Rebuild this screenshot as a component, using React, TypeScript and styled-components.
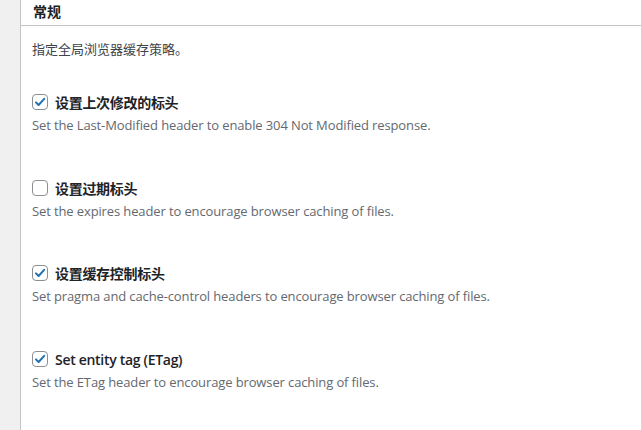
import React from "react";
import styled, { createGlobalStyle } from "styled-components";

const Global = createGlobalStyle`
  html, body { margin: 0; padding: 0; background: #f0f0f1; }
  body { font-family: "Open Sans", "Noto Sans CJK SC", sans-serif; }
`;

const Page = styled.div`
  display: flex;
  height: 430px;
  overflow: hidden;
`;

const Gutter = styled.div`
  width: 20px;
  flex: none;
  background: #f0f0f1;
`;

const Panel = styled.div`
  flex: 1;
  background: #fff;
  border-left: 1px solid #c3c4c7;
`;

const Header = styled.div`
  height: 26px;
  border-bottom: 1px solid #c3c4c7;
  padding-left: 12px;
  display: flex;
  align-items: center;
  box-sizing: border-box;
`;

const Title = styled.h2`
  margin: 0;
  font-size: 14px;
  font-weight: 700;
  color: #1d2327;
  font-family: "Noto Sans CJK SC", sans-serif;
  margin-top: -3px;
`;

const Body = styled.div`
  padding: 13px 11px 0;
`;

const Intro = styled.p`
  margin: 0 0 33px;
  font-size: 13px;
  line-height: 20px;
  color: #3c434a;
  font-family: "Noto Sans CJK SC", sans-serif;
`;

const Option = styled.div`
  height: 85.7px;
`;

const Row = styled.label`
  display: flex;
  align-items: center;
  gap: 7px;
  height: 20px;
`;

const Box = styled.span<{ $checked: boolean }>`
  width: 16px;
  height: 16px;
  box-sizing: border-box;
  border: 1px solid #8c8f94;
  border-radius: 4px;
  background: #fff;
  display: flex;
  align-items: center;
  justify-content: center;
`;

const Label = styled.span`
  font-size: 14px;
  font-weight: 600;
  letter-spacing: -0.3px;
  color: #1d2327;
  font-family: "Open Sans", "Noto Sans CJK SC", sans-serif;
`;

const Desc = styled.p`
  margin: 3px 0 0;
  font-size: 13px;
  line-height: 20px;
  letter-spacing: -0.12px;
  color: #646970;
`;

const Check = () => (
  <svg width="16" height="16" viewBox="0 0 16 16">
    <path d="M3.4 8.4l3 3L12.8 4.4" fill="none" stroke="#2271b1" strokeWidth="2.3" strokeLinecap="round" strokeLinejoin="round" />
  </svg>
);

const options = [
  { label: "设置上次修改的标头", desc: "Set the Last-Modified header to enable 304 Not Modified response.", checked: true },
  { label: "设置过期标头", desc: "Set the expires header to encourage browser caching of files.", checked: false },
  { label: "设置缓存控制标头", desc: "Set pragma and cache-control headers to encourage browser caching of files.", checked: true },
  { label: "Set entity tag (ETag)", desc: "Set the ETag header to encourage browser caching of files.", checked: true },
];

export default function App() {
  return (
    <>
      <Global />
      <Page>
        <Gutter />
        <Panel>
          <Header>
            <Title>常规</Title>
          </Header>
          <Body>
            <Intro>指定全局浏览器缓存策略。</Intro>
            {options.map((o) => (
              <Option key={o.label}>
                <Row>
                  <Box $checked={o.checked}>{o.checked && <Check />}</Box>
                  <Label>{o.label}</Label>
                </Row>
                <Desc>{o.desc}</Desc>
              </Option>
            ))}
          </Body>
        </Panel>
      </Page>
    </>
  );
}
